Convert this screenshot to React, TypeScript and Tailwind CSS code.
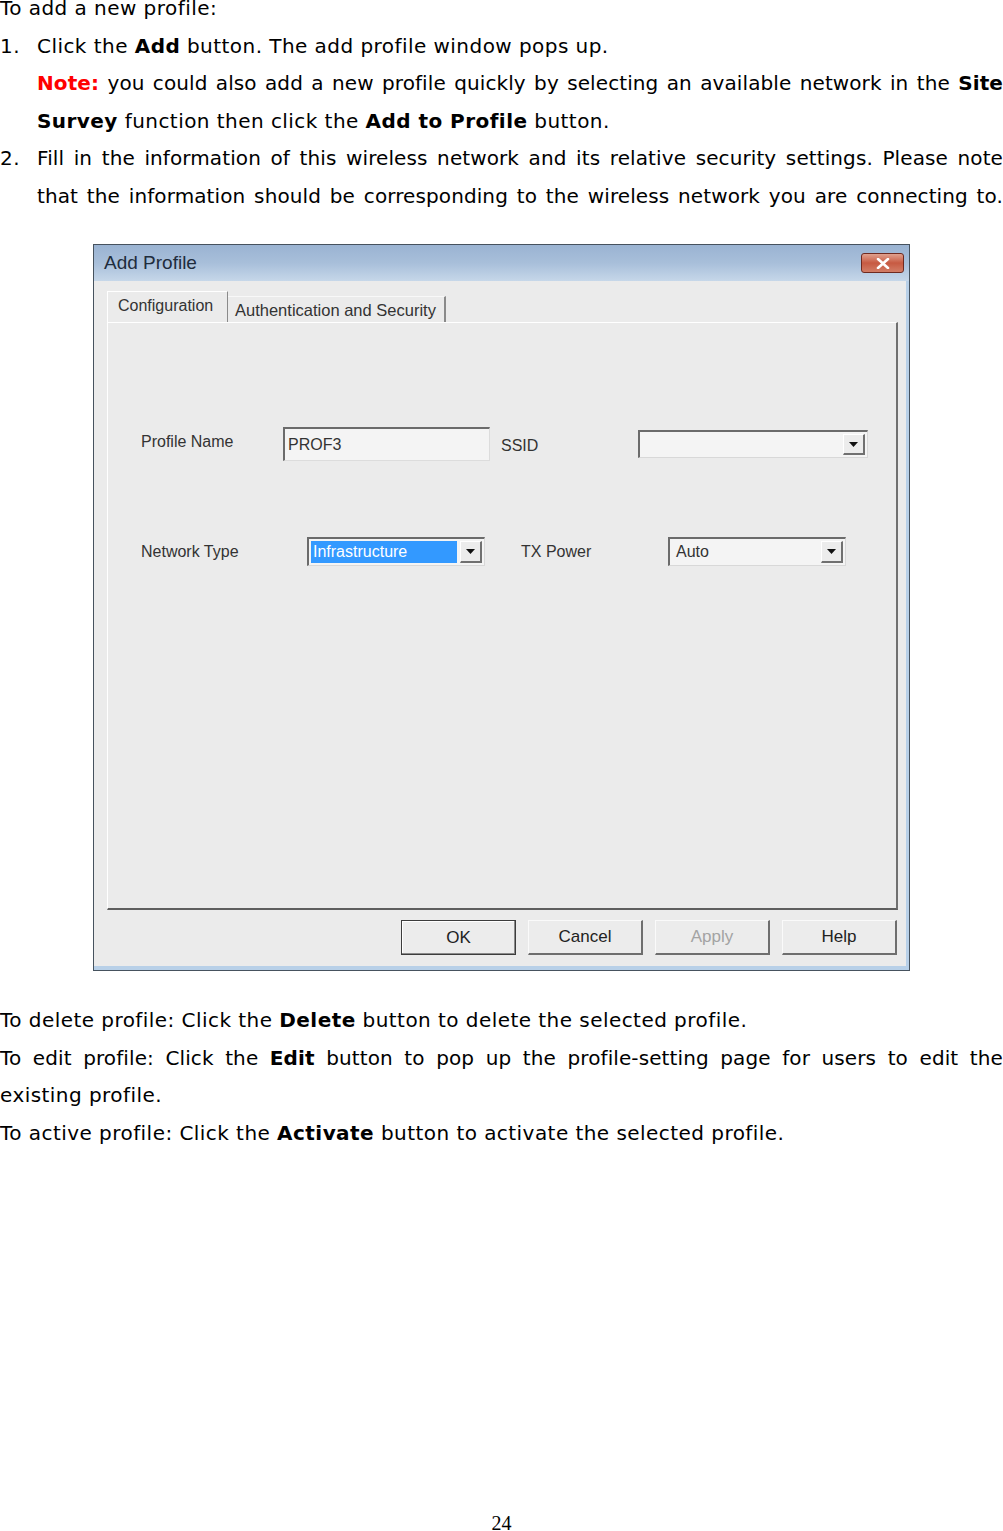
import React from 'react';

function Arrow() {
  return (
    <span className="flex h-full w-[22px] shrink-0 items-center justify-center border-t border-l border-r-2 border-b-2 border-t-white border-l-white border-r-[#707070] border-b-[#707070] bg-[#ececec]">
      <svg width="9" height="5" viewBox="0 0 9 5">
        <path d="M0 0h9L4.5 5z" fill="#111" />
      </svg>
    </span>
  );
}

function Combo({ value, selected, width }: { value?: string; selected?: boolean; width: string }) {
  return (
    <div
      className={
        'flex h-full items-stretch border-t-2 border-l-2 border-b border-r border-t-[#6b6b6b] border-l-[#6b6b6b] border-b-[#d8d8d8] border-r-[#d8d8d8] bg-[#f4f4f4] p-[2px] ' +
        width
      }
    >
      <div className="flex flex-1 items-center">
        {value &&
          (selected ? (
            <span className="flex h-full w-full items-center bg-[#3399ff] pl-[2px] text-white">{value}</span>
          ) : (
            <span className="pl-[4px] text-[#333]">{value}</span>
          ))}
      </div>
      {selected && <span className="w-[3px]" />}
      <Arrow />
    </div>
  );
}

function Btn({ label, def, disabled }: { label: string; def?: boolean; disabled?: boolean }) {
  return (
    <div
      className={
        def
          ? 'flex h-[35px] w-[115px] items-center justify-center border border-[#3c3c3c] bg-[#ececec] shadow-[inset_-1px_-1px_0_#8a8a8a,inset_1px_1px_0_#ffffff] text-[#222]'
          : 'flex h-[35px] w-[115px] items-center justify-center border-t border-l border-r-2 border-b-2 border-t-[#fafafa] border-l-[#fafafa] border-r-[#6e6e6e] border-b-[#6e6e6e] bg-[#ececec] ' +
            (disabled ? 'text-[#a3a3a3]' : 'text-[#222]')
      }
    >
      {label}
    </div>
  );
}

function Dialog() {
  return (
    <div className="mx-auto mt-[29px] flex h-[727px] w-[817px] flex-col border border-[#46525e] bg-[#b8d0e8] font-['Liberation_Sans',Arial,sans-serif] text-[16px] tracking-normal">
      <div className="flex h-[36px] shrink-0 items-center justify-between bg-gradient-to-b from-[#9ab3d2] via-[#a8bfda] to-[#c6d7e9] pl-[10px] pr-[5px]">
        <span className="text-[19px] text-[#1f2d3d]">Add Profile</span>
        <span className="flex h-[20px] w-[43px] items-center justify-center rounded-[3px] border border-[#6f2a20] bg-gradient-to-b from-[#e0a08e] via-[#c75a42] to-[#d27d66]">
          <svg width="14" height="11" viewBox="0 0 14 11">
            <path d="M2 1l10 9M12 1L2 10" stroke="#fff" strokeWidth="2.6" strokeLinecap="round" />
          </svg>
        </span>
      </div>
      <div className="mr-[3px] mb-[4px] flex flex-1 flex-col bg-[#ebebeb] pl-[13px] pr-[8px]">
        <div className="mt-[10px] flex h-[31px] items-end">
          <div className="flex h-[31px] w-[121px] items-center border-t border-l border-r border-t-white border-l-white border-r-[#8a8a8a] bg-[#ebebeb] pl-[10px] pb-[2px] text-[#333]">
            Configuration
          </div>
          <div className="flex h-[26px] w-[218px] items-center border-t border-r-2 border-t-[#f8f8f8] border-r-[#8a8a8a] pl-[7px] pt-[2px] text-[16.5px] text-[#333]">
            Authentication and Security
          </div>
        </div>
        <div className="flex h-[588px] flex-col border-t border-l border-r-2 border-b-2 border-t-white border-l-white border-r-[#707070] border-b-[#5e5e5e] pl-[33px] text-[#333]">
          <div className="mt-[104px] flex h-[34px] items-center">
            <span className="w-[142px] -mt-[4px]">Profile Name</span>
            <div className="flex h-[34px] w-[207px] items-center border-t-2 border-l-2 border-b border-r border-t-[#6b6b6b] border-l-[#6b6b6b] border-b-[#dcdcdc] border-r-[#dcdcdc] bg-[#f4f4f4] pl-[3px]">
              PROF3
            </div>
            <span className="ml-[11px] mt-[3px] w-[137px]">SSID</span>
            <div className="h-[28px]">
              <Combo width="w-[230px]" />
            </div>
          </div>
          <div className="mt-[76px] flex h-[29px] items-center">
            <span className="w-[166px]">Network Type</span>
            <Combo width="w-[178px]" value="Infrastructure" selected />
            <span className="ml-[36px] w-[147px]">TX Power</span>
            <Combo width="w-[178px]" value="Auto" />
          </div>
        </div>
        <div className="mt-[10px] flex justify-end gap-[12px] pr-[1px] text-[17px]">
          <Btn label="OK" def />
          <Btn label="Cancel" />
          <Btn label="Apply" disabled />
          <Btn label="Help" />
        </div>
      </div>
    </div>
  );
}

export default function App() {
  return (
    <div className="flex h-[1531px] w-[1003px] flex-col overflow-hidden bg-white font-['DejaVu_Sans',Verdana,sans-serif] text-[20px] leading-[37.5px] tracking-[0.45px] text-black">
      <div className="-mt-[10px]">
        <p>To add a new profile:</p>
        <div className="flex">
          <span className="w-[37px] shrink-0">1.</span>
          <p>
            Click the <b>Add</b> button. The add profile window pops up.
          </p>
        </div>
        <p className="pl-[37px] text-justify tracking-[0.1px] [text-align-last:justify]">
          <b className="text-[#ff0000]">Note:</b> you could also add a new profile quickly by selecting an available network in the{' '}
          <b>Site</b>
        </p>
        <p className="pl-[37px]">
          <b>Survey</b> function then click the <b>Add to Profile</b> button.
        </p>
        <div className="flex">
          <span className="w-[37px] shrink-0">2.</span>
          <p className="flex-1 text-justify tracking-[0.1px] [text-align-last:justify]">
            Fill in the information of this wireless network and its relative security settings. Please note
          </p>
        </div>
        <p className="pl-[37px] text-justify tracking-[0.1px] [text-align-last:justify]">
          that the information should be corresponding to the wireless network you are connecting to.
        </p>
      </div>

      <Dialog />

      <div className="mt-[31px]">
        <p>
          To delete profile: Click the <b>Delete</b> button to delete the selected profile.
        </p>
        <p className="text-justify tracking-[0.1px] [text-align-last:justify]">
          To edit profile: Click the <b>Edit</b> button to pop up the profile-setting page for users to edit the
        </p>
        <p>existing profile.</p>
        <p>
          To active profile: Click the <b>Activate</b> button to activate the selected profile.
        </p>
      </div>

      <div className="mt-auto text-center font-['Liberation_Serif',serif] text-[20px] leading-[16px] tracking-normal">24</div>
    </div>
  );
}
